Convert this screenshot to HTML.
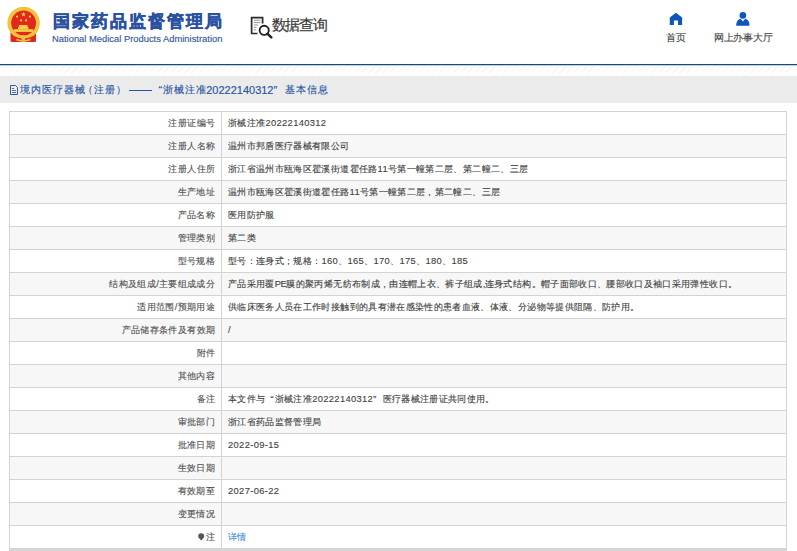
<!DOCTYPE html>
<html><head><meta charset="utf-8">
<style>
*{margin:0;padding:0;box-sizing:border-box}
html,body{width:797px;height:551px;overflow:hidden;background:#fff;font-family:"Liberation Sans",sans-serif}
.a{position:absolute;white-space:nowrap}
#emb{position:absolute;left:0;top:0;width:50px;height:50px}
#t1{left:52.5px;top:10.6px;font-size:17px;letter-spacing:2px;font-weight:bold;color:#2b52a0;line-height:22px;-webkit-text-stroke:0.5px #2b52a0}
#t2{left:52px;top:33.6px;font-size:9.4px;color:#34589c;line-height:10px;-webkit-text-stroke:0.15px #34589c}
#sq{position:absolute;left:250px;top:16px;width:23px;height:23px}
#sqt{left:271.5px;top:15.3px;font-size:15px;letter-spacing:-1.1px;color:#3a3a3a;line-height:20px;-webkit-text-stroke:0.2px #3a3a3a}
.nav{color:#444;font-size:10px;letter-spacing:-0.25px;line-height:10px;text-align:center;-webkit-text-stroke:0.12px #444}
#bl{position:absolute;left:0;top:64px;width:797px;height:1px;background:#1f4672;box-shadow:0 1px 0 #b9d3ea}
#sh{position:absolute;left:0;top:66px;width:797px;height:7px;background:repeating-linear-gradient(135deg,#f2f6fa 0 1px,#fff 1px 5px)}
#bar{position:absolute;left:0;top:76px;width:797px;height:27px;background:#ebebeb}
.bt{top:83px;font-size:10px;letter-spacing:1.15px;color:#2856a3;line-height:14px;-webkit-text-stroke:0.15px #2856a3}
table{position:absolute;left:9px;top:111px;width:778px;border-collapse:collapse;font-size:9px;letter-spacing:0.35px;color:#404040;-webkit-text-stroke:0.12px currentColor}
td{border:1px solid #d3d3d3;height:23px;padding:0;vertical-align:middle;white-space:nowrap}
td.l{width:212px;text-align:right;padding-right:5.8px;color:#505050}
td.v{padding-left:6px}
tr:nth-child(even) td{background:#f7f7f7}
i{font-style:normal;font-size:9.35px}
a{color:#3d8ae0;text-decoration:none}
u{text-decoration:none;display:inline-block;width:9.35px}
.q1{text-align:right;padding-right:1px}.q2{text-align:left}
</style></head><body>
<svg id="emb" viewBox="0 0 50 50">
  <path d="M10.5 32.5 L36 32.5 L36 41.8 Q30 42.5 23.4 41.5 Q17 42.5 10.5 41.8 Z" fill="#dc2a1f"/>
  <circle cx="23.6" cy="23" r="16.2" fill="#f2c33c"/>
  <circle cx="23.6" cy="22.9" r="12.4" fill="#e2271c"/>
  <polygon points="23.4,11.9 24.1,13.6 25.8,13.6 24.5,14.7 25,16.5 23.4,15.4 21.8,16.5 22.3,14.7 21,13.6 22.7,13.6" fill="#f6cf45"/>
  <circle cx="17" cy="16.6" r="1.1" fill="#f6cf45"/><circle cx="29.9" cy="16.6" r="1.1" fill="#f6cf45"/>
  <circle cx="21.1" cy="20.4" r="1.1" fill="#f6cf45"/><circle cx="26.1" cy="20.4" r="1.1" fill="#f6cf45"/>
  <rect x="18.9" y="25" width="8.7" height="2" fill="#f6cf45"/>
  <rect x="18" y="26.9" width="10.4" height="2.3" fill="#f6cf45"/>
  <rect x="13.7" y="29.2" width="19.4" height="2.7" fill="#f6cf45"/>
  <path d="M14 36.6 Q23.5 41 33 36.6" fill="none" stroke="#dc2a1f" stroke-width="0.9"/>
  <path d="M16.4 38.8 Q23.4 41.5 30.4 38.8 L30.4 40.6 Q23.4 42.6 16.4 40.6Z" fill="#f2c33c"/>
  <circle cx="23.3" cy="38.6" r="1.9" fill="#f2c33c"/>
</svg>
<div id="t1" class="a">国家药品监督管理局</div>
<div id="t2" class="a">National Medical Products Administration</div>
<svg id="sq" viewBox="0 0 23 23">
  <path d="M1.6 18.3 V1.6 H12.6 V7.5 M1.6 17.5 H7.5" fill="none" stroke="#2a2a2a" stroke-width="1.7"/>
  <path d="M3.8 4.2 H10.5 M3.8 6.6 H10.5 M3.8 9 H8 M3.8 11.4 H6.5 M3.8 13.8 H6" stroke="#888" stroke-width="0.9"/>
  <circle cx="14.2" cy="14.3" r="4.6" fill="none" stroke="#222" stroke-width="1.9"/>
  <path d="M17.6 17.8 L21.3 21.3" stroke="#222" stroke-width="2.5" stroke-linecap="round"/>
</svg>
<div id="sqt" class="a">数据查询</div>
<svg style="position:absolute;left:669px;top:12px" width="14" height="14" viewBox="0 0 14 14"><path d="M6.9 0.8 L13.1 5.6 V12.9 H9 V8.4 H4.9 V12.9 H0.8 V5.6 Z" fill="#0e56bd"/></svg>
<div class="a nav" style="left:660px;top:33px;width:32px">首页</div>
<svg style="position:absolute;left:735px;top:11px" width="16" height="16" viewBox="0 0 16 16"><circle cx="7.9" cy="4.4" r="3.3" fill="#0e56bd"/><path d="M1.2 14.7 Q1.2 8.6 5.6 7.8 L7.9 10.6 L10.2 7.8 Q14.5 8.6 14.5 14.7 Z" fill="#0e56bd"/></svg>
<div class="a nav" style="left:710px;top:33px;width:66px">网上办事大厅</div>
<div id="bl"></div>
<div id="sh"></div>
<div id="bar"></div>
<svg style="position:absolute;left:9px;top:84px" width="11" height="12" viewBox="0 0 11 12"><path d="M1.5 1.5 H6.5 L8.5 3.5 V10.5 H1.5 Z" fill="none" stroke="#37589a" stroke-width="1"/><path d="M3 4.5 H5 M3 6.5 H7 M3 8.5 H7" stroke="#5b6fa6" stroke-width="1"/></svg>
<div class="a bt" style="left:19.5px">境内医疗器械</div>
<div class="a bt" style="left:82.5px">（注册）</div>
<div style="position:absolute;left:129.2px;top:90px;width:23px;height:1.4px;background:#2856a3"></div>
<div class="a bt" style="left:158.5px;letter-spacing:0;font-size:11px">“</div>
<div class="a bt" style="left:162.5px">浙械注准</div>
<div class="a bt" style="left:206.2px;font-size:11px;letter-spacing:0">20222140312</div>
<div class="a bt" style="left:273.5px;font-size:11px;letter-spacing:0">”</div>
<div class="a bt" style="left:284.5px">基本信息</div>
<table>
<tr><td class="l">注册证编号</td><td class="v">浙械注准<i>20222140312</i></td></tr>
<tr><td class="l">注册人名称</td><td class="v">温州市邦盾医疗器械有限公司</td></tr>
<tr><td class="l">注册人住所</td><td class="v">浙江省温州市瓯海区瞿溪街道瞿任路<i>11</i>号第一幢第二层、第二幢二、三层</td></tr>
<tr><td class="l">生产地址</td><td class="v">温州市瓯海区瞿溪街道瞿任路<i>11</i>号第一幢第二层，第二幢二、三层</td></tr>
<tr><td class="l">产品名称</td><td class="v">医用防护服</td></tr>
<tr><td class="l">管理类别</td><td class="v">第二类</td></tr>
<tr><td class="l">型号规格</td><td class="v">型号：连身式；规格：<i>160</i>、<i>165</i>、<i>170</i>、<i>175</i>、<i>180</i>、<i>185</i></td></tr>
<tr><td class="l">结构及组成<i>/</i>主要组成成分</td><td class="v">产品采用覆<i style="letter-spacing:-0.4px">PE</i>膜的聚丙烯无纺布制成，由连帽上衣、裤子组成<i style="letter-spacing:-0.6px">,</i>连身式结构。帽子面部收口、腰部收口及袖口采用弹性收口。</td></tr>
<tr><td class="l">适用范围<i>/</i>预期用途</td><td class="v">供临床医务人员在工作时接触到的具有潜在感染性的患者血液、体液、分泌物等提供阻隔、防护用。</td></tr>
<tr><td class="l">产品储存条件及有效期</td><td class="v"><i>/</i></td></tr>
<tr><td class="l">附件</td><td class="v"></td></tr>
<tr><td class="l">其他内容</td><td class="v"></td></tr>
<tr><td class="l">备注</td><td class="v">本文件与<u class="q1">“</u>浙械注准<i>20222140312</i><u class="q2">”</u>医疗器械注册证共同使用。</td></tr>
<tr><td class="l">审批部门</td><td class="v">浙江省药品监督管理局</td></tr>
<tr><td class="l">批准日期</td><td class="v"><i>2022-09-15</i></td></tr>
<tr><td class="l">生效日期</td><td class="v"></td></tr>
<tr><td class="l">有效期至</td><td class="v"><i>2027-06-22</i></td></tr>
<tr><td class="l">变更情况</td><td class="v"></td></tr>
<tr><td class="l"><svg width="6.6" height="8" viewBox="0 0 7 8" style="vertical-align:-1px;margin-right:1px"><path d="M3.4 7.8 C2.4 6.4 0.2 5 0.2 3.3 A3.2 3.2 0 1 1 6.6 3.3 C6.6 5 4.4 6.4 3.4 7.8Z" fill="#555"/></svg>注</td><td class="v"><a>详情</a></td></tr>
</table>
<div style="position:absolute;left:9px;top:549px;width:778px;height:2px;background:#d6d6d6"></div>
</body></html>
